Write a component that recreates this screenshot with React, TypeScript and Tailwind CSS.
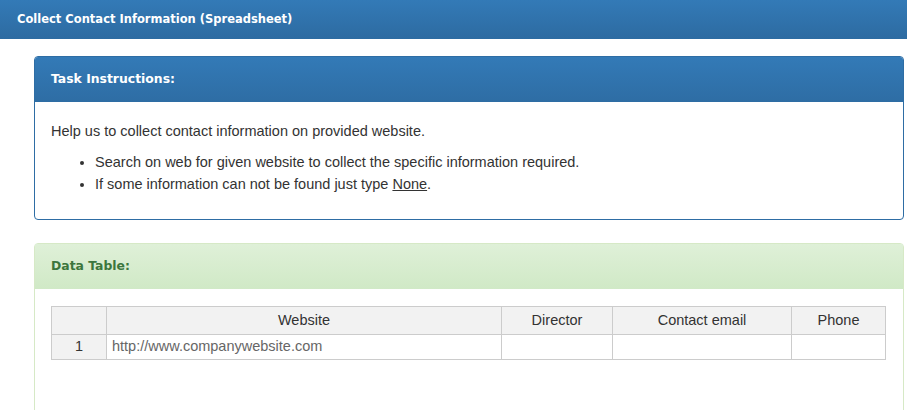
import React from 'react';

const columns = ['Website', 'Director', 'Contact email', 'Phone'];

const rows = [{ website: 'http://www.companywebsite.com', director: '', email: '', phone: '' }];

const App: React.FC = () => {
    return (
        <div className="h-[410px] overflow-hidden bg-white font-['Liberation_Sans',Arial,sans-serif] text-[14.5px] text-[#333]">
            {/* Top bar */}
            <div className="h-[39px] flex items-center pl-[17px] bg-gradient-to-b from-[#337ab7] to-[#2d6ba1] text-white font-['DejaVu_Sans',Verdana,sans-serif] font-bold text-[11.5px]">
                Collect Contact Information (Spreadsheet)
            </div>

            <div className="pl-[34px] pr-[3px] pt-[17px]">
                {/* Instructions panel */}
                <div className="border border-[#2e6da4] rounded-[4px] overflow-hidden">
                    <div className="h-[45px] flex items-center pl-[16px] bg-gradient-to-b from-[#337ab7] to-[#2e6da4] text-white font-['DejaVu_Sans',Verdana,sans-serif] font-bold text-[12.4px]">
                        Task Instructions:
                    </div>
                    <div className="pl-[16px] pt-[19px] pb-[24px] leading-[20px]">
                        <p>Help us to collect contact information on provided website.</p>
                        <ul className="list-disc pl-[44px] mt-[10px] leading-[22px]">
                            <li>Search on web for given website to collect the specific information required.</li>
                            <li>
                                If some information can not be found just type <span className="underline">None</span>.
                            </li>
                        </ul>
                    </div>
                </div>

                {/* Data table panel */}
                <div className="mt-[23px] border border-[#d6e9c6] rounded-t-[4px] h-[180px]">
                    <div className="h-[45px] flex items-center pl-[16px] bg-gradient-to-b from-[#dff0d8] to-[#d0e9c6] text-[#3c763d] font-['DejaVu_Sans',Verdana,sans-serif] font-bold text-[12.4px]">
                        Data Table:
                    </div>
                    <div className="pl-[16px] pr-[17px] pt-[17px]">
                        <table className="w-full border-collapse table-fixed">
                            <colgroup>
                                <col className="w-[55px]" />
                                <col className="w-[395px]" />
                                <col className="w-[111px]" />
                                <col className="w-[179px]" />
                                <col />
                            </colgroup>
                            <thead>
                                <tr className="h-[28px] bg-[#f2f2f2]">
                                    <th className="border border-[#cccccc] font-normal"></th>
                                    {columns.map((c) => (
                                        <th key={c} className="border border-[#cccccc] font-normal text-center">
                                            {c}
                                        </th>
                                    ))}
                                </tr>
                            </thead>
                            <tbody>
                                {rows.map((r, i) => (
                                    <tr key={i} className="h-[25px]">
                                        <td className="border border-[#cccccc] bg-[#f2f2f2] text-center">{i + 1}</td>
                                        <td className="border border-[#cccccc] pl-[5px] text-[#666]">{r.website}</td>
                                        <td className="border border-[#cccccc]">{r.director}</td>
                                        <td className="border border-[#cccccc]">{r.email}</td>
                                        <td className="border border-[#cccccc]">{r.phone}</td>
                                    </tr>
                                ))}
                            </tbody>
                        </table>
                    </div>
                </div>
            </div>
        </div>
    );
};

export default App;
